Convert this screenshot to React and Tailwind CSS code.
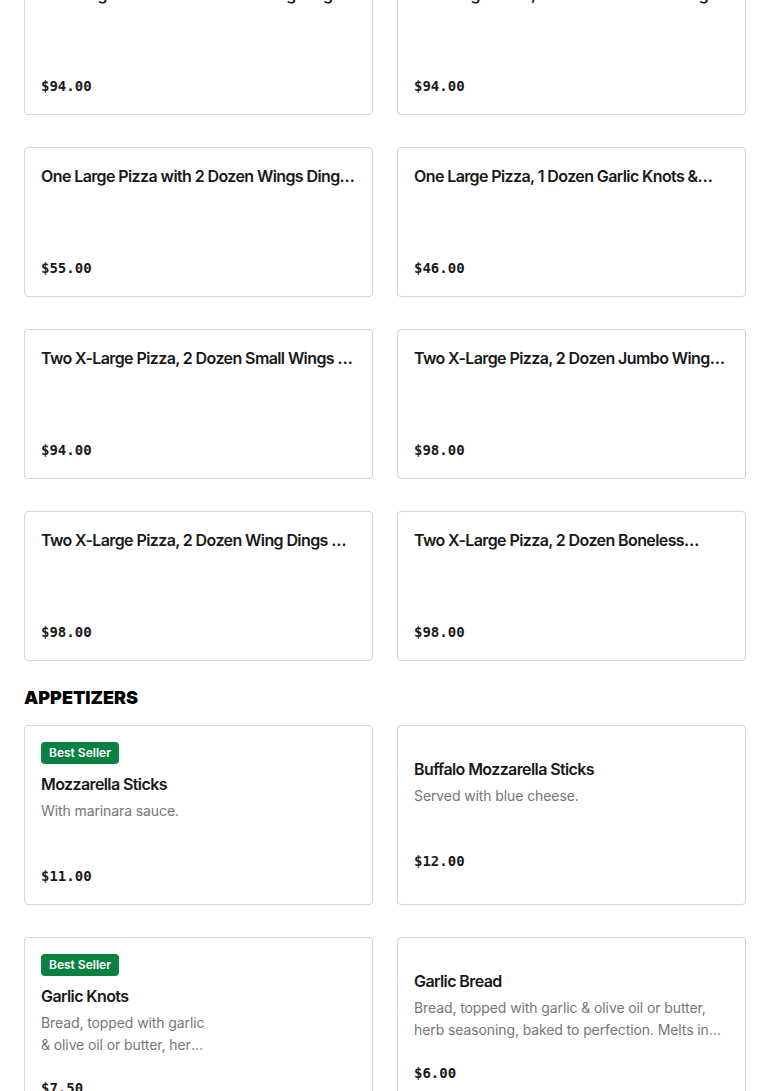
import React from "react";

const combos = [
  { title: "Two Large Pizza with 2 Dozen Wing Dings & 2 Liter Soda", price: "$94.00" },
  { title: "Two Large Pizza, 2 Dozen Boneless Wings & 2 Liter Soda", price: "$94.00" },
  { title: "One Large Pizza with 2 Dozen Wings Dings & 2 Liter Soda", price: "$55.00" },
  { title: "One Large Pizza, 1 Dozen Garlic Knots & Two Liter Soda", price: "$46.00" },
  { title: "Two X-Large Pizza, 2 Dozen Small Wings & 2 Liter Soda", price: "$94.00" },
  { title: "Two X-Large Pizza, 2 Dozen Jumbo Wings & 2 Liter Soda", price: "$98.00" },
  { title: "Two X-Large Pizza, 2 Dozen Wing Dings & 2 Liter Soda", price: "$98.00" },
  { title: "Two X-Large Pizza, 2 Dozen Boneless Wings & 2 Liter Soda", price: "$98.00" },
];

const appetizers = [
  { title: "Mozzarella Sticks", desc: "With marinara sauce.", price: "$11.00", best: true },
  { title: "Buffalo Mozzarella Sticks", desc: "Served with blue cheese.", price: "$12.00" },
  {
    title: "Garlic Knots",
    desc: "Bread, topped with garlic & olive oil or butter, herb seasoning, baked to perfection.",
    price: "$7.50",
    best: true,
    narrow: true,
  },
  {
    title: "Garlic Bread",
    desc: "Bread, topped with garlic & olive oil or butter, herb seasoning, baked to perfection. Melts in your mouth.",
    price: "$6.00",
  },
];

function ItemCard({ item }) {
  return (
    <div className="flex flex-col justify-center rounded-[4px] border border-[#d4d4d4] bg-white p-4">
      {item.best && (
        <div className="mb-2 flex">
          <span className="rounded-[4px] bg-[#0b8043] px-2 text-[12px] font-semibold leading-[22px] text-white">
            Best Seller
          </span>
        </div>
      )}
      <div className="line-clamp-1 text-[16px] font-semibold leading-[24px] tracking-[-0.6px] text-[#191919]">
        {item.title}
      </div>
      <div
        className={`mt-1 min-h-[44px] text-[14px] leading-[22px] tracking-[-0.1px] text-[#767676] line-clamp-2 ${item.narrow ? "w-[168px]" : ""}`}
      >
        {item.desc}
      </div>
      <div className="mt-5 text-[14px] font-bold leading-[24px] text-[#191919] [font-family:'DejaVu_Sans_Mono',monospace]">
        {item.price}
      </div>
    </div>
  );
}

export default function App() {
  return (
    <div className="min-h-screen bg-white [font-family:Inter,'Liberation_Sans',sans-serif]">
      <div className="-mt-[35px] px-6">
        <div className="grid grid-cols-2 gap-x-6 gap-y-8">
          {combos.map((c, i) => (
            <ItemCard key={i} item={c} />
          ))}
        </div>

        <h2 className="mt-[25px] mb-[15px] text-[18px] font-black uppercase leading-[24px] text-black">Appetizers</h2>

        <div className="grid grid-cols-2 gap-x-6 gap-y-8">
          {appetizers.map((a, i) => (
            <ItemCard key={i} item={a} />
          ))}
        </div>
      </div>
    </div>
  );
}
